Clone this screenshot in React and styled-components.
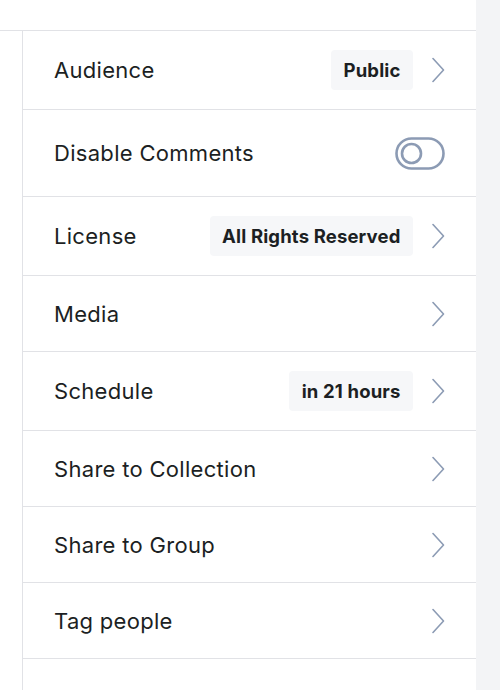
import React from 'react';
import styled, { createGlobalStyle } from 'styled-components';

const GlobalStyle = createGlobalStyle`
  html, body {
    margin: 0;
    padding: 0;
    background: #ffffff;
  }
  body {
    font-family: Inter, "Noto Sans", "Liberation Sans", sans-serif;
    -webkit-font-smoothing: antialiased;
  }
`;

const Page = styled.div`
  display: flex;
  width: 500px;
  height: 690px;
  overflow: hidden;
`;

const Main = styled.div`
  flex: 1;
  display: flex;
  flex-direction: column;
  background: #ffffff;
`;

const TopBar = styled.div`
  height: 30px;
  flex-shrink: 0;
  border-bottom: 1px solid #e1e2e6;
`;

const Body = styled.div`
  flex: 1;
  display: flex;
`;

const Gutter = styled.div`
  width: 22px;
  flex-shrink: 0;
  border-right: 1px solid #e1e2e6;
`;

const SideStrip = styled.div`
  width: 24px;
  flex-shrink: 0;
  background: #f3f4f6;
`;

const List = styled.ul`
  flex: 1;
  list-style: none;
  margin: 0;
  padding: 0;
`;

const Row = styled.li`
  display: flex;
  align-items: center;
  gap: 19px;
  padding: 19px 31px 19px 31px;
  border-bottom: 1px solid #e1e2e6;
  min-height: ${({ $tall }) => ($tall ? '48px' : '37px')};
  box-sizing: content-box;
`;

const Label = styled.span`
  flex: 1;
  font-size: 22px;
  color: #1c1f23;
  letter-spacing: 0.3px;
`;

const Badge = styled.span`
  display: inline-flex;
  align-items: center;
  height: 40px;
  padding: 0 12.5px;
  border-radius: 4px;
  background: #f6f7f9;
  font-size: 18.5px;
  font-weight: 700;
  letter-spacing: 0.15px;
  color: #1c1f23;
`;

const Chevron = () => (
  <svg width="13" height="26" viewBox="0 0 13 26" fill="none">
    <path d="M1 1.5 L11.5 13 L1 24.5" stroke="#8c9bb4" strokeWidth="1.6" strokeLinecap="round" strokeLinejoin="round" />
  </svg>
);

const ToggleIcon = () => (
  <svg width="50" height="33" viewBox="0 0 50 33" fill="none">
    <rect x="1.5" y="1.5" width="47" height="30" rx="15" stroke="#8c9bb4" strokeWidth="2.6" />
    <circle cx="16.5" cy="16.5" r="9.5" stroke="#8c9bb4" strokeWidth="2.6" />
  </svg>
);

const items = [
  { label: 'Audience', value: 'Public' },
  { label: 'Disable Comments', toggle: true },
  { label: 'License', value: 'All Rights Reserved' },
  { label: 'Media' },
  { label: 'Schedule', value: 'in 21 hours' },
  { label: 'Share to Collection' },
  { label: 'Share to Group' },
  { label: 'Tag people' },
];

const App = () => {
  return (
    <>
      <GlobalStyle />
      <Page>
        <Main>
          <TopBar />
          <Body>
            <Gutter />
            <List>
              {items.map((item) => (
                <Row key={item.label} $tall={item.toggle}>
                  <Label>{item.label}</Label>
                  {item.value && <Badge>{item.value}</Badge>}
                  {item.toggle ? <ToggleIcon /> : <Chevron />}
                </Row>
              ))}
            </List>
          </Body>
        </Main>
        <SideStrip />
      </Page>
    </>
  );
};

export default App;
